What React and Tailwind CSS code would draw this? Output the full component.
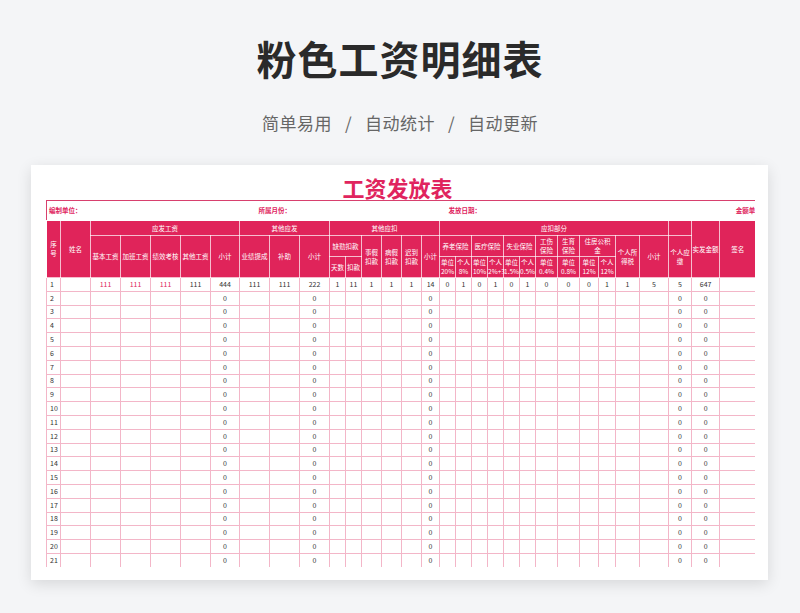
const W=[14,30,30,30,30,30,29,30,30,30,16,16,20,20,20,18,16,16,16,16,16,16,22,22,19,17,24,29,23,28,36];
const F={fontFamily:'"Noto Sans CJK SC","Noto Sans",sans-serif'};
const H="border border-white/70 text-white font-normal leading-[9px] px-0 text-center align-middle bg-[#e0245a]";
const row1=['1','','111','111','111','111','444','111','111','222','1','11','1','1','1','14','0','1','0','1','0','1','0','0','0','1','1','5','5','647',''];
export default function App(){
  const rows=[];
  for(let i=1;i<=21;i++){
    const cells=i===1?row1:W.map((_,j)=>j===0?String(i):[6,9,15,28,29].includes(j)?'0':'');
    rows.push(<tr key={i} className="h-[13.8px]">{cells.map((c,j)=>(
      <td key={j} className={`border border-[#f3b6c8] text-[7px] leading-none p-0 ${j===0?'text-left pl-[3px]':'text-center'} ${i===1&&j>=2&&j<=4?'text-[#e0245e]':'text-[#333]'}`}>{c}</td>))}</tr>);
  }
  return(
  <div className="w-[800px] h-[613px] bg-[#f4f5f7] overflow-hidden" style={F}>
    <div className="pt-[32px] text-center text-[40px] font-bold text-[#2a2a2a] leading-[52px] tracking-[1px]">粉色工资明细表</div>
    <div className="mt-[27px] text-center text-[17px] text-[#666] leading-[24px] tracking-[0.5px]">简单易用 &nbsp;&nbsp;/ &nbsp;&nbsp;自动统计 &nbsp;&nbsp;/ &nbsp;&nbsp;自动更新</div>
    <div className="mx-[31px] mt-[30px] w-[737px] h-[415px] bg-white shadow-[0_4px_14px_rgba(0,0,0,0.12)] pt-[9px] pl-[15px] overflow-hidden">
      <div className="text-center text-[22px] font-bold text-[#e0245e] leading-[26px] w-[709px] -ml-[3px]">工资发放表</div>
      <div className="h-[367px] overflow-hidden w-[709px]">
      <table className="table-fixed border-collapse border border-[#d8406e] w-[709px]">
        <colgroup>{W.map((w,i)=><col key={i} style={{width:w}}/>)}</colgroup>
        <thead className="text-[6.5px]">
          <tr className="h-[20px] text-[6.5px] font-bold text-[#e0245e] bg-white">
            <td colSpan={7} className="pl-[2px]">编制单位：</td>
            <td colSpan={9} className="pl-[19px]">所属月份：</td>
            <td colSpan={14} className="pl-[9px] text-left">发放日期：</td>
            <td className="whitespace-nowrap pl-[16px]">金额单</td>
          </tr>
          <tr className="h-[15px]">
            <th rowSpan={3} className={H}>序<br/>号</th>
            <th rowSpan={3} className={H}>姓名</th>
            <th colSpan={5} className={H}>应发工资</th>
            <th colSpan={3} className={H}>其他应发</th>
            <th colSpan={6} className={H}>其他应扣</th>
            <th colSpan={12} className={H}>应扣部分</th>
            <th className={H}></th>
            <th rowSpan={3} className={H}>实发金额</th>
            <th rowSpan={3} className={H}>签名</th>
          </tr>
          <tr className="h-[21px]">
            {['基本工资','加班工资','绩效考核','其他工资','小计','业绩提成','补助','小计'].map((t,i)=><th key={i} rowSpan={2} className={H}>{t}</th>)}
            <th colSpan={2} className={H}>缺勤扣款</th>
            {['事假扣款','病假扣款','迟到扣款'].map(t=><th key={t} rowSpan={2} className={H}>{t.slice(0,2)}<br/>{t.slice(2)}</th>)}
            <th rowSpan={2} className={H}>小计</th>
            <th colSpan={2} className={H}>养老保险</th>
            <th colSpan={2} className={H}>医疗保险</th>
            <th colSpan={2} className={H}>失业保险</th>
            <th className={H}>工伤<br/>保险</th>
            <th className={H}>生育<br/>保险</th>
            <th colSpan={2} className={H}>住房公积<br/>金</th>
            <th rowSpan={2} className={H}>个人所<br/>得税</th>
            <th rowSpan={2} className={H}>小计</th>
            <th rowSpan={2} className={H}>个人应<br/>缴</th>
          </tr>
          <tr className="h-[21px]">
            <th className={H}>天数</th><th className={H}>扣款</th>
            {[['单位','20%'],['个人','8%'],['单位','10%'],['个人','2%+3'],['单位','1.5%'],['个人','0.5%'],['单位','0.4%'],['单位','0.8%'],['单位','12%'],['个人','12%']].map(([a,b],i)=><th key={i} className={H}>{a}<br/>{b}</th>)}
          </tr>
        </thead>
        <tbody>{rows}</tbody>
      </table>
      </div>
    </div>
  </div>);
}
